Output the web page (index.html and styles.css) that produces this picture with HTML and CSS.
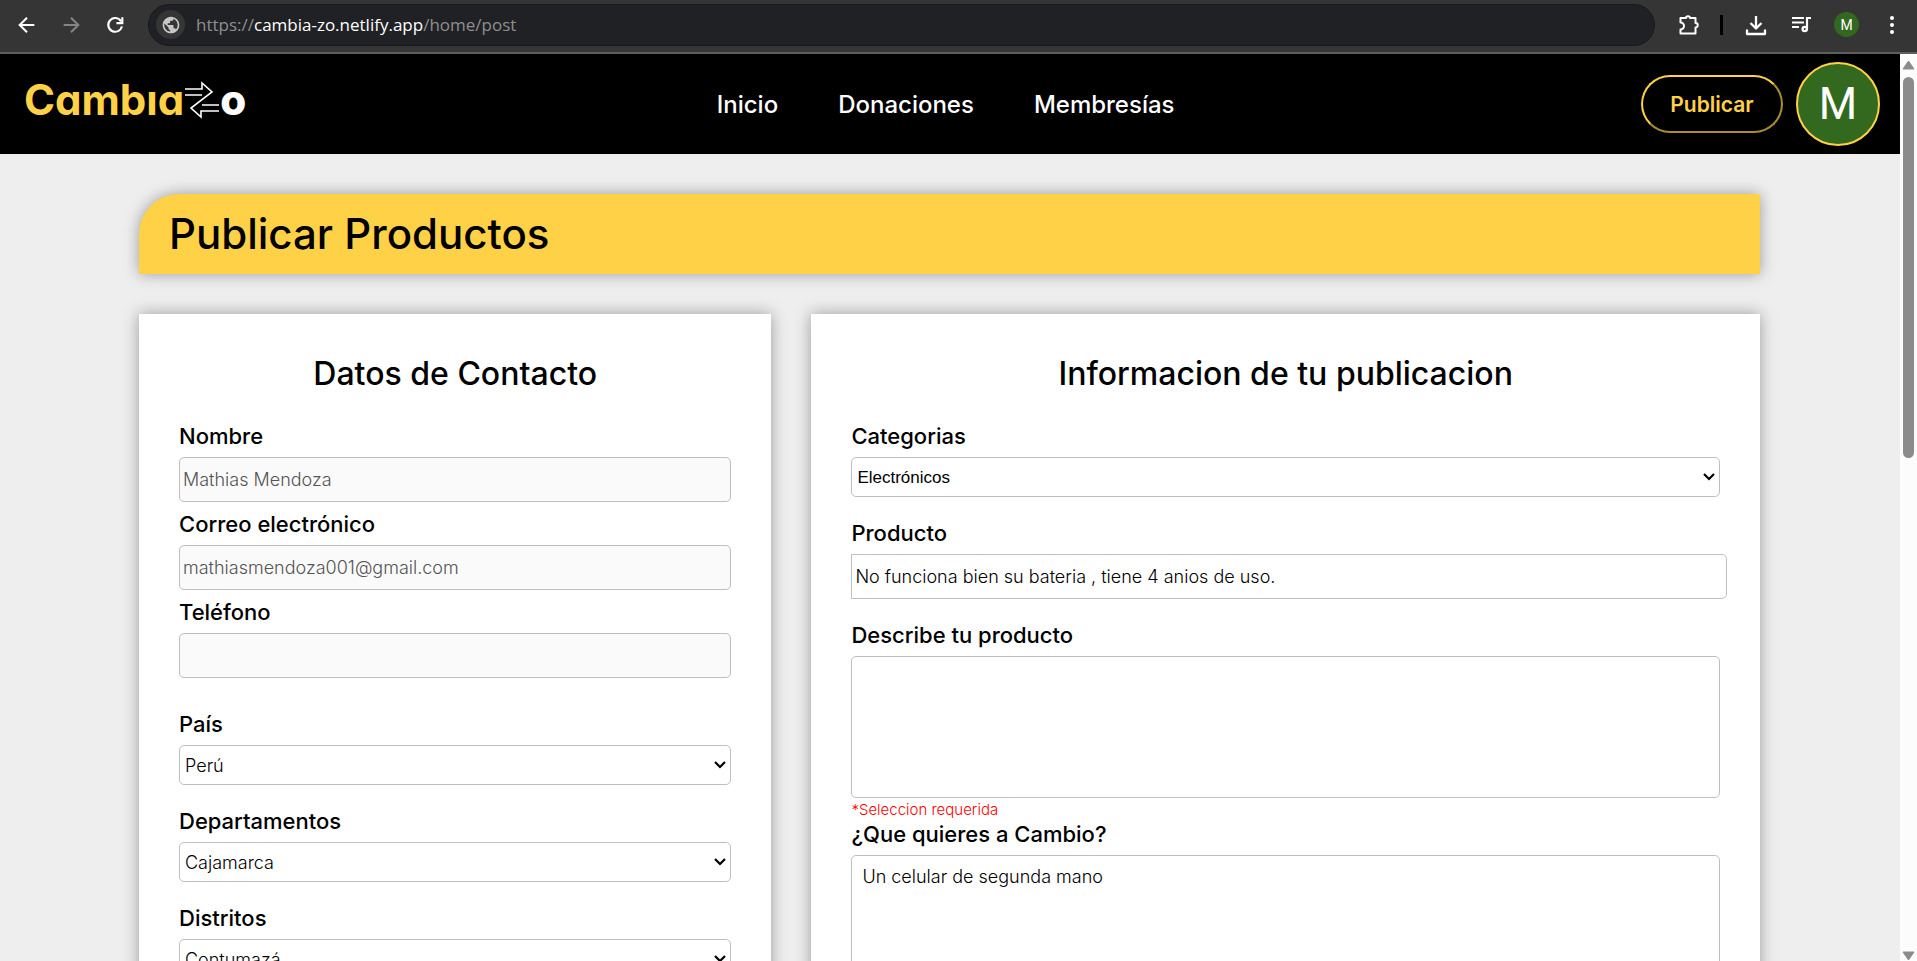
FILE: index.html
```html
<!DOCTYPE html>
<html lang="es">
<head>
<meta charset="utf-8">
<title>CambiaZo</title>
<link rel="stylesheet" href="styles.css">
</head>
<body>
<div class="browser-bar">
  <button class="tool" aria-label="Atrás"><svg width="22" height="22" viewBox="0 0 24 24"><path d="M20 12H4.500M12 4l-8 8 8 8" fill="none" stroke="#fff" stroke-width="2.200"/></svg></button>
  <button class="tool" aria-label="Adelante"><svg width="22" height="22" viewBox="0 0 24 24"><path d="M4 12h15.500M12 4l8 8-8 8" fill="none" stroke="#858585" stroke-width="2.200"/></svg></button>
  <button class="tool" aria-label="Recargar"><svg width="22" height="22" viewBox="0 0 24 24"><path d="M18.600 8A7.500 7.500 0 1 0 19.500 13.500" fill="none" stroke="#fff" stroke-width="2.300"/><path d="M20 3.500V10h-6.500" fill="none" stroke="#fff" stroke-width="2.300"/></svg></button>
  <div class="omnibox">
    <span class="site-icon"><svg width="20" height="20" viewBox="0 0 24 24"><path fill="#c7c7c7" d="M12 2C6.480 2 2 6.480 2 12s4.480 10 10 10 10-4.480 10-10S17.520 2 12 2zm-1 17.930c-3.950-.49-7-3.850-7-7.930 0-.62.08-1.210.21-1.790L9 15v1c0 1.100.9 2 2 2v1.930zm6.900-2.540c-.26-.81-1-1.390-1.900-1.390h-1v-3c0-.55-.45-1-1-1H8v-2h2c.55 0 1-.45 1-1V7h2c1.100 0 2-.9 2-2v-.41c2.930 1.190 5 4.060 5 7.410 0 2.080-.8 3.970-2.100 5.390z"/></svg></span>
    <span class="url">https://<span class="host">cambia-zo.netlify.app</span>/home/post</span>
  </div>
  <div class="tools">
    <button class="tool" aria-label="Extensiones"><svg width="20" height="20" viewBox="0 0 20 20"><path d="M1.500 3H7a2 1.800 0 0 1 4 0h5.500v5a2 2 0 0 1 0 4.500V18.500h-15V14.500a3.500 3.500 0 0 0 0-7z" fill="none" stroke="#fff" stroke-width="2" stroke-linejoin="round"/></svg></button>
    <span class="divider"></span>
    <button class="tool" aria-label="Descargas"><svg width="24" height="24" viewBox="0 0 24 24"><path d="M12 3v12M6.500 10l5.500 5.500 5.500-5.500M3 16.500v4.500h18v-4.500" fill="none" stroke="#fff" stroke-width="2.300" stroke-linejoin="round"/></svg></button>
    <button class="tool" aria-label="Multimedia"><svg width="24" height="24" viewBox="0 0 24 24"><path d="M3 5h12M3 9.500h12M3 14h7" fill="none" stroke="#fff" stroke-width="2"/><path d="M18 16V5h4" fill="none" stroke="#fff" stroke-width="2.200"/><circle cx="15.700" cy="16" r="3.300" fill="#fff"/><circle cx="15.700" cy="16" r="1" fill="#353535"/></svg></button>
    <button class="profile" aria-label="Perfil">M</button>
    <button class="tool" aria-label="Menú"><svg width="24" height="24" viewBox="0 0 24 24" fill="#fff"><circle cx="12" cy="5" r="2"/><circle cx="12" cy="12" r="2"/><circle cx="12" cy="19" r="2"/></svg></button>
  </div>
</div>

<div class="viewport">
  <div class="page">
    <header class="header">
      <a class="logo" href="#" aria-label="CambiaZo"><span class="logo-name">Cambıa</span><svg width="36" height="38" viewBox="0 0 36 38" fill="none" stroke="#fff" stroke-width="1.600"><path d="M1 8h17V2l10 9L7 27l10 9v-6h18M1 14h17M18 24h17"/></svg><span class="logo-o">o</span></a>
      <nav class="nav">
        <a href="#">Inicio</a>
        <a href="#">Donaciones</a>
        <a href="#">Membresías</a>
      </nav>
      <div class="account">
        <button class="publish">Publicar</button>
        <a class="avatar" href="#">M</a>
      </div>
    </header>

    <main class="content">
      <h1 class="banner">Publicar Productos</h1>
      <form class="cards">
        <section class="card">
          <h2>Datos de Contacto</h2>
          <div class="contact">
            <div class="field"><label for="nombre">Nombre</label><input id="nombre" type="text" value="Mathias Mendoza" disabled></div>
            <div class="field"><label for="correo">Correo electrónico</label><input id="correo" type="email" value="mathiasmendoza001@gmail.com" disabled></div>
            <div class="field"><label for="telefono">Teléfono</label><input id="telefono" type="tel" disabled></div>
          </div>
          <div class="fields">
            <div class="field"><label for="pais">País</label><select id="pais"><option>Perú</option></select></div>
            <div class="field"><label for="departamento">Departamentos</label><select id="departamento"><option>Cajamarca</option></select></div>
            <div class="field"><label for="distrito">Distritos</label><select id="distrito"><option>Contumazá</option></select></div>
          </div>
        </section>
        <section class="card">
          <h2>Informacion de tu publicacion</h2>
          <div class="fields">
            <div class="field"><label for="categoria">Categorias</label><select id="categoria" class="category"><option>Electrónicos</option></select></div>
            <div class="field"><label for="producto">Producto</label><input id="producto" class="product" type="text" value="No funciona bien su bateria , tiene 4 anios de uso."></div>
            <div class="field"><label for="descripcion">Describe tu producto</label><textarea id="descripcion"></textarea></div>
          </div>
          <p class="error">*Seleccion requerida</p>
          <div class="field"><label for="cambio">¿Que quieres a Cambio?</label><textarea id="cambio">Un celular de segunda mano</textarea></div>
        </section>
      </form>
    </main>
  </div>
  <div class="scrollbar">
    <svg width="13" height="10" viewBox="0 0 13 10"><path d="M6.500 1L12 9H1z" fill="#8b8b8b" stroke="#8b8b8b" stroke-linejoin="round"/></svg>
    <div class="thumb"></div>
    <svg class="down" width="13" height="10" viewBox="0 0 13 10"><path d="M6.500 9L12 1H1z" fill="#8b8b8b" stroke="#8b8b8b" stroke-linejoin="round"/></svg>
  </div>
</div>
</body>
</html>
```
FILE: styles.css
```css
* { box-sizing: border-box; }

body {
  margin: 0;
  height: 100vh;
  display: flex;
  flex-direction: column;
  overflow: hidden;
  font-family: Inter, "Liberation Sans", sans-serif;
  color: #000;
}

button { border: 0; padding: 0; background: none; cursor: pointer; }
a { color: inherit; text-decoration: none; }
svg { display: block; }

/* Browser toolbar */
.browser-bar {
  flex: none;
  height: 54px;
  padding: 3px 13px 6px 16px;
  display: flex;
  align-items: center;
  gap: 22px;
  background: #353535;
  border-bottom: 2px solid #5e5e5e;
}
.omnibox {
  flex: 1;
  height: 42px;
  padding-left: 7px;
  display: flex;
  align-items: center;
  gap: 11px;
  border-radius: 21px;
  border: 1px solid #18191b;
  background: #202124;
}
.site-icon {
  width: 29px;
  height: 29px;
  display: grid;
  place-items: center;
  border-radius: 50%;
  background: #353535;
}
.url { font: 17px/24px "Open Sans", sans-serif; color: #8f8f8f; }
.host { color: #fff; }
.tools { display: flex; align-items: center; gap: 21px; margin-left: 2px; }
.divider { width: 3px; height: 20px; background: #000; }
.profile {
  width: 25px;
  height: 25px;
  border-radius: 50%;
  background: #33691e;
  color: #fff;
  font: 14px Roboto, sans-serif;
}

.viewport { flex: 1; min-height: 0; display: flex; }
.page { flex: 1; overflow: hidden; background: #eee; }

/* Site header */
.header {
  height: 100px;
  padding: 0 20px 0 24px;
  display: flex;
  align-items: center;
  justify-content: space-between;
  background: #000;
}
.logo {
  display: flex;
  align-items: center;
  font-size: 42px;
  line-height: 48px;
  font-weight: 800;
  font-feature-settings: "cv11";
  padding: 0 4px 8px 0;
}
.logo-name { color: #ffd146; font-weight: 700; }
.logo-o { color: #fff; }
.nav { display: flex; gap: 60px; color: #fff; font-size: 24px; font-weight: 500; }
.account { display: flex; align-items: center; gap: 13px; }
.publish {
  width: 142px;
  height: 58px;
  border: 2px outset #ffd146;
  border-radius: 29px;
  color: #ffd146;
  font: 600 21px Inter, sans-serif;
}
.avatar {
  width: 84px;
  height: 84px;
  display: grid;
  place-items: center;
  border: 2px solid #ffd146;
  border-radius: 50%;
  background: #33691e;
  color: #fff;
  font: 44px Roboto, sans-serif;
}

/* Publication form */
.content { padding: 40px 140px 40px 139px; }
.banner {
  margin: 0 0 40px;
  padding: 16px 30px;
  border-radius: 40px 0 0 0;
  background: #ffd146;
  box-shadow: 0 0 15px rgba(0, 0, 0, .35);
  font-size: 42px;
  line-height: 48px;
  font-weight: 500;
}
.cards { display: grid; grid-template-columns: 2fr 3fr; gap: 40px; }
.card {
  min-width: 0;
  padding: 40px;
  background: #fff;
  box-shadow: 0 0 15px rgba(0, 0, 0, .35);
}
h2 {
  margin: 0 0 30px;
  text-align: center;
  font-size: 32px;
  line-height: 40px;
  font-weight: 500;
}
.contact { display: grid; gap: 10px; margin-bottom: 34px; }
.fields { display: grid; gap: 24px; }
.field { display: flex; flex-direction: column; gap: 8px; }
label { font-size: 22px; line-height: 25px; font-weight: 500; }
input, select, textarea {
  width: 100%;
  margin: 0;
  border: 1px solid #bfbfbf;
  border-radius: 5px;
  background: #fff;
  color: #000;
  font: 300 18px Inter, sans-serif;
}
input { height: 45px; padding: 1px 3px; }
input:disabled { background: #fafafa; color: #545454; }
select {
  height: 40px;
  padding: 0 20px 0 5px;
  appearance: none;
  background: #fff url("data:image/svg+xml,%3Csvg xmlns='http://www.w3.org/2000/svg' width='12' height='8' viewBox='0 0 12 8'%3E%3Cpath d='M1 1l5 5 5-5' fill='none' stroke='%23000' stroke-width='2.200'/%3E%3C/svg%3E") no-repeat right 4px center;
}
textarea { height: 142px; padding: 10px; resize: none; }
.category { font: 17px "Liberation Sans", sans-serif; }
.product { width: calc(100% + 7px); border-radius: 0 5px 5px 0; }
.error { margin: 2px 0; color: #f00; font-size: 15px; line-height: 20px; font-weight: 300; }

/* Scrollbar */
.scrollbar {
  flex: none;
  width: 17px;
  padding: 6px 2px 0;
  display: flex;
  flex-direction: column;
  align-items: center;
  background: #fcfcfc;
}
.thumb { width: 11px; height: 42.3%; margin-top: 7px; border-radius: 6px; background: #8b8b8b; }
.down { margin-top: auto; }
```
